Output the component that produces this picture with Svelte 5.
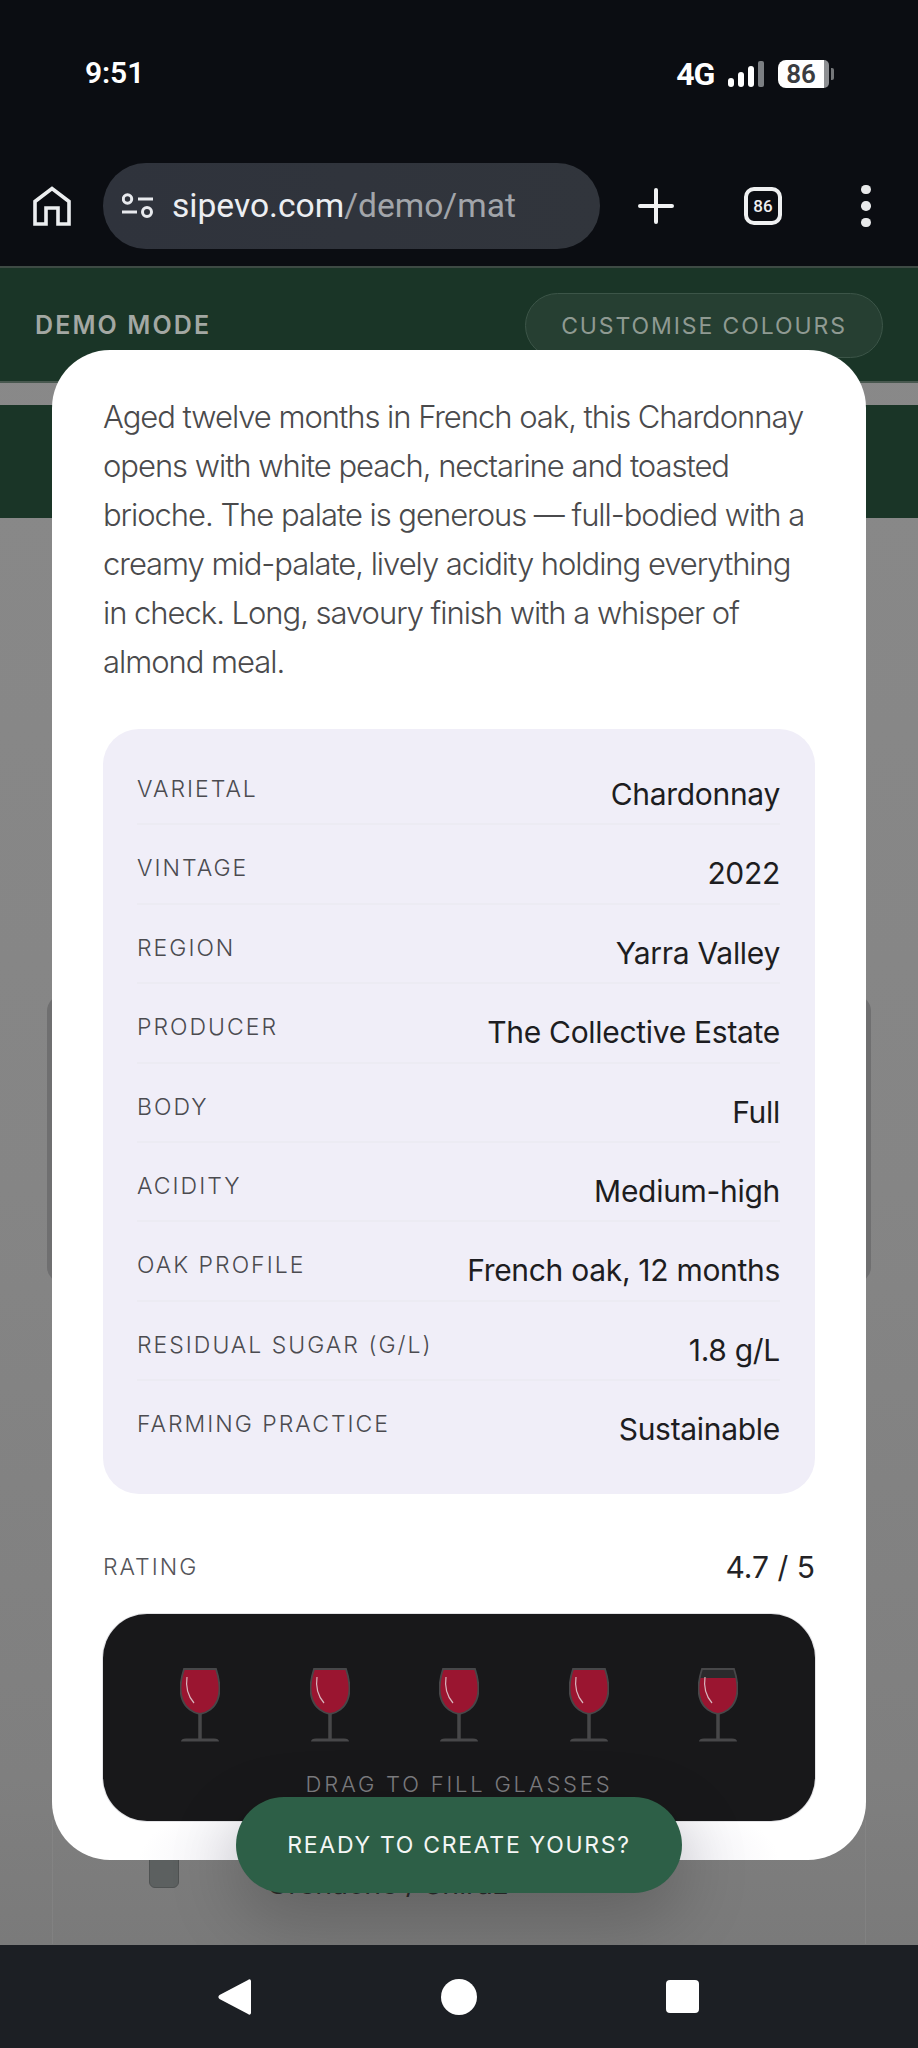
<script>
  const rows = [
    ['VARIETAL', 'Chardonnay'],
    ['VINTAGE', '2022'],
    ['REGION', 'Yarra Valley'],
    ['PRODUCER', 'The Collective Estate'],
    ['BODY', 'Full'],
    ['ACIDITY', 'Medium-high'],
    ['OAK PROFILE', 'French oak, 12 months'],
    ['RESIDUAL SUGAR (G/L)', '1.8 g/L'],
    ['FARMING PRACTICE', 'Sustainable']
  ];
  const glasses = [3, 3, 3, 3, 11];
  const bowl = 'M4 2H36C39.500 13 41 24 37.500 33C34.500 41 27 46 20 47C13 46 5.500 41 2.500 33C-1 24 0.500 13 4 2Z';
</script>

<div class="screen">
  <header class="chrome">
    <div class="status">
      <span class="time">9:51</span>
      <div class="status-right">
        <span class="net">4G</span>
        <svg class="signal" width="36" height="26" viewBox="0 0 36 26">
          <rect x="0" y="17" width="6" height="9" rx="3" fill="#fff" />
          <rect x="10" y="11" width="6" height="15" rx="3" fill="#fff" />
          <rect x="20" y="5" width="6" height="21" rx="3" fill="#fff" />
          <rect x="30" y="0" width="6" height="26" rx="2" fill="#7c7f83" />
        </svg>
        <div class="batt"><span class="batt-fill">86</span><span class="batt-end"></span><span class="batt-cap"></span></div>
      </div>
    </div>
    <div class="toolbar">
      <svg class="home" width="38" height="40" viewBox="0 0 38 40" fill="none" stroke="#eceef0" stroke-width="3.600">
        <path d="M2 38V15.500L19 2.500L36 15.500V38H25V22H13V38Z" stroke-linejoin="miter" />
      </svg>
      <div class="omni">
        <svg width="32" height="26" viewBox="0 0 32 26" fill="none" stroke="#e8eaee" stroke-width="3">
          <circle cx="5.500" cy="6" r="4.200" />
          <path d="M16 6H31" />
          <path d="M0 19H15" />
          <circle cx="25" cy="19" r="4.500" />
        </svg>
        <span class="url">sipevo.com<span class="url-dim">/demo/mat</span></span>
      </div>
      <svg class="plus" width="36" height="36" viewBox="0 0 36 36" stroke="#f1f2f3" stroke-width="4" stroke-linecap="round">
        <path d="M18 2V34M2 18H34" />
      </svg>
      <div class="tabs">86</div>
      <div class="dots"><i></i><i></i><i></i></div>
    </div>
  </header>

  <main class="page">
    <div class="demo">
      <span class="demo-label">DEMO MODE</span>
      <span class="customise">CUSTOMISE COLOURS</span>
    </div>
    <div class="bar-second"></div>
    <div class="under">
      <div class="under-card"></div>
      <div class="under-row">
        <span class="check"></span>
        <span class="under-text">Grenache / Shiraz</span>
      </div>
    </div>

    <div class="modal">
      <p class="desc">Aged twelve months in French oak, this Chardonnay opens with white peach, nectarine and toasted brioche. The palate is generous — full-bodied with a creamy mid-palate, lively acidity holding everything in check. Long, savoury finish with a whisper of almond meal.</p>
      <div class="specs">
        {#each rows as r, i}
          <div class="row" class:last={i === rows.length - 1}>
            <span class="k">{r[0]}</span>
            <span class="v">{r[1]}</span>
          </div>
        {/each}
      </div>
      <div class="rating-head">
        <span class="rating-k">RATING</span>
        <span class="rating-v">4.7 / 5</span>
      </div>
      <div class="modal-fade"></div>
      <div class="rater">
        <div class="glasses">
          {#each glasses as g, i}
            <svg width="40" height="76" viewBox="0 0 40 76">
              <defs>
                <clipPath id="bowl{i}">
                  <path d={bowl} />
                </clipPath>
              </defs>
              <path d={bowl} fill="#2a2a2c" />
              <rect x="-2" y={g} width="44" height="50" fill="#9a1530" clip-path="url(#bowl{i})" />
              <path d={bowl} fill="none" stroke="#474749" stroke-width="1.800" />
              <path d="M7 10C5.500 20 8 29 14 36" fill="none" stroke="#d9b7bf" stroke-width="1.200" />
              <path d="M20 47V72" stroke="#474749" stroke-width="3.500" />
              <path d="M1 74.500C1 72.500 3 71.500 6 71.500H34C37 71.500 39 72.500 39 74.500Z" fill="#474749" />
            </svg>
          {/each}
        </div>
        <span class="drag">DRAG TO FILL GLASSES</span>
      </div>
    </div>

    <div class="cta">READY TO CREATE YOURS?</div>
  </main>

  <footer class="nav">
    <svg width="34" height="36" viewBox="0 0 34 36"><path d="M33 2.500V33.500C33 35.500 31.500 36.500 30 35L1.500 20C0 18.800 0 17.200 1.500 16L30 1C31.500 -0.500 33 0.500 33 2.500Z" fill="#fff" /></svg>
    <span class="nav-home"></span>
    <span class="nav-square"></span>
  </footer>
</div>

<style>
  :global(body) {
    margin: 0;
    background: #0b0d12;
  }
  .screen {
    width: 918px;
    height: 2048px;
    display: flex;
    flex-direction: column;
    overflow: hidden;
    font-family: Inter, "Liberation Sans", sans-serif;
  }
  .chrome {
    height: 268px;
    flex: none;
    background: #0b0d12;
    color: #fff;
    display: flex;
    flex-direction: column;
    border-bottom: 2px solid #3e4a44;
    box-sizing: border-box;
  }
  .status {
    height: 163px;
    padding: 53px 84px 0 85px;
    box-sizing: border-box;
    display: flex;
    justify-content: space-between;
    align-items: flex-start;
  }
  .time {
    font: 600 30px/40px Roboto, sans-serif;
    letter-spacing: -0.1px;
  }
  .status-right {
    display: flex;
    align-items: center;
    gap: 14px;
    height: 42px;
  }
  .net {
    font: 700 32px/40px Roboto, sans-serif;
    letter-spacing: -1.200px;
  }
  .batt {
    display: flex;
    align-items: center;
    height: 28px;
    width: 56px;
  }
  .batt-fill {
    width: 46px;
    height: 28px;
    background: #fff;
    border-radius: 8px 0 0 8px;
    color: #3a3c40;
    font: 600 26px/28px Roboto, sans-serif;
    text-align: center;
  }
  .batt-end {
    width: 5px;
    height: 28px;
    background: #8d8f92;
    border-radius: 0 8px 8px 0;
  }
  .batt-cap {
    width: 3px;
    height: 12px;
    background: #75777a;
    margin-left: 2px;
    border-radius: 0 2px 2px 0;
  }
  .toolbar {
    display: flex;
    align-items: center;
    height: 86px;
    padding-left: 33px;
  }
  .home {
    margin-right: 32px;
  }
  .omni {
    width: 497px;
    height: 86px;
    border-radius: 43px;
    background: linear-gradient(90deg, #2f333c, #31353c);
    display: flex;
    align-items: center;
    padding-left: 19px;
    box-sizing: border-box;
    gap: 18px;
  }
  .url {
    font: 400 33.600px/44px Roboto, sans-serif;
    color: #eceef2;
  }
  .url-dim {
    color: #a2a5aa;
  }
  .plus {
    margin-left: 38px;
  }
  .tabs {
    width: 38px;
    height: 38px;
    margin-left: 70px;
    box-sizing: border-box;
    border: 4px solid #eff0f1;
    border-radius: 10px;
    font: 500 17px/30px Roboto, sans-serif;
    text-align: center;
    color: #eff0f1;
  }
  .dots {
    display: flex;
    flex-direction: column;
    gap: 7px;
    margin-left: 79px;
  }
  .dots i {
    width: 9.500px;
    height: 9.500px;
    border-radius: 50%;
    background: #e8e9ea;
    display: block;
  }
  .page {
    flex: 1;
    position: relative;
    background: linear-gradient(180deg, #898989 0%, #858585 55%, #7f7f7f 90%, #7a7a7a 100%);
    overflow: hidden;
  }
  .demo {
    height: 115px;
    background: #1a3527;
    border-bottom: 2px solid #48584f;
    box-sizing: border-box;
    display: flex;
    justify-content: space-between;
    align-items: flex-start;
    padding: 25px 35px 0;
  }
  .demo-label {
    font: 600 25px/64px Inter, sans-serif;
    letter-spacing: 2.100px;
    color: #a3a8a3;
  }
  .customise {
    width: 358px;
    height: 65px;
    border: 1px solid #3c5548;
    background: #263f32;
    border-radius: 33px;
    box-sizing: border-box;
    text-align: center;
    font: 400 23px/65px Inter, sans-serif;
    letter-spacing: 1.900px;
    color: #8f9a92;
  }
  .bar-second {
    height: 113px;
    margin-top: 22px;
    background: #1a3527;
  }
  .under {
    position: relative;
    padding: 477px 47px 0;
  }
  .under-card {
    height: 288px;
    border-radius: 16px;
    background: #6f6f70;
  }
  .under-row {
    display: flex;
    align-items: flex-start;
    gap: 88px;
    margin: 537px 5px 0;
    padding-left: 96px;
    height: 124px;
    border-left: 1px solid rgba(255, 255, 255, 0.06);
    border-right: 1px solid rgba(255, 255, 255, 0.06);
  }
  .check {
    width: 30px;
    height: 68px;
    background: #5c6060;
    border: 1px solid #4f5252;
    border-radius: 6px;
    box-sizing: border-box;
    flex: none;
  }
  .under-text {
    font: 400 28.500px/40px Inter, sans-serif;
    margin-top: 44px;
    color: #2b2b2b;
  }
  .modal {
    position: absolute;
    left: 52px;
    top: 82px;
    width: 814px;
    height: 1510px;
    box-sizing: border-box;
    background: #fff;
    border-radius: 58px;
    padding: 42px 51px 0;
    overflow: hidden;
  }
  .desc {
    margin: 0 0 43px;
    font: 300 31px/49px Inter, sans-serif;
    letter-spacing: -1.040px;
    color: #4a4a4c;
    width: 712px;
  }
  .specs {
    background: #f0eef8;
    border-radius: 36px;
    padding: 17px 35px 33px 34px;
  }
  .row {
    display: flex;
    justify-content: space-between;
    height: 79.400px;
    box-sizing: border-box;
    border-bottom: 2px solid #ecebf3;
    padding-top: 27px;
  }
  .row.last {
    border-bottom: none;
  }
  .k {
    font: 300 23px/32px Inter, sans-serif;
    letter-spacing: 2px;
    color: #4b4b50;
  }
  .v {
    font: 400 30px/44px Inter, sans-serif;
    letter-spacing: -0.300px;
    margin-top: -1px;
    color: #1d1d21;
  }
  .rating-head {
    display: flex;
    justify-content: space-between;
    align-items: center;
    height: 44px;
    margin-top: 51px;
  }
  .rating-k {
    font: 300 23px/34px Inter, sans-serif;
    letter-spacing: 2px;
    color: #55555a;
  }
  .rating-v {
    font: 400 30px/44px Inter, sans-serif;
    letter-spacing: 0;
    color: #232326;
  }
  .rater {
    height: 207px;
    margin-top: 25px;
    background: #18181a;
    border-radius: 44px;
    box-shadow: 0 0 0 1px #e3e3e6;
    display: flex;
    flex-direction: column;
    align-items: center;
    box-sizing: border-box;
    padding-top: 53px;
    position: relative;
  }
  .glasses {
    display: flex;
    gap: 89.500px;
    height: 76px;
  }
  .drag {
    margin-top: 26px;
    font: 300 22px/30px Inter, sans-serif;
    letter-spacing: 2.800px;
    color: #7d7d80;
  }
  .modal-fade {
    position: absolute;
    left: 0;
    right: 0;
    bottom: 0;
    height: 120px;
    background: radial-gradient(ellipse 320px 90px at 50% 100%, #d8d7df 0%, #ecebf2 55%, rgba(255, 255, 255, 0) 100%);
    pointer-events: none;
  }
  .cta {
    position: absolute;
    left: 236px;
    top: 1529px;
    width: 446px;
    height: 96px;
    border-radius: 48px;
    background: #2d5f47;
    color: #f4f6f5;
    text-align: center;
    font: 400 23px/96px Inter, sans-serif;
    letter-spacing: 1.700px;
    box-shadow: 0 24px 70px rgba(0, 0, 0, 0.22);
  }
  .nav {
    height: 103px;
    flex: none;
    background: #1c1f24;
    display: flex;
    align-items: center;
    justify-content: center;
    gap: 189px;
    box-sizing: border-box;
    padding-right: 2px;
  }
  .nav-home {
    width: 36px;
    height: 36px;
    background: #fff;
    border-radius: 50%;
  }
  .nav-square {
    width: 33px;
    height: 33px;
    background: #fff;
    border-radius: 4px;
  }
</style>
